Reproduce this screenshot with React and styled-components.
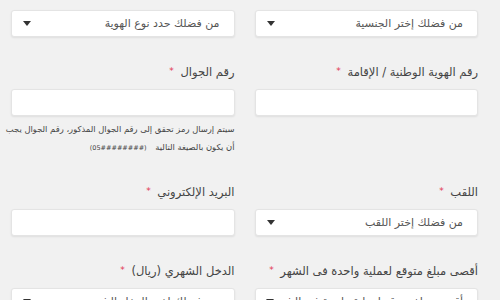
import styled, { createGlobalStyle } from "styled-components";

const GlobalStyle = createGlobalStyle`
  html, body {
    margin: 0;
    padding: 0;
    background: #f1f1f1;
  }
  body {
    font-family: "DejaVu Sans", "Noto Sans", sans-serif;
    overflow: hidden;
  }
`;

const Form = styled.div`
  direction: rtl;
  padding: 10px 22px 0 11px;
  display: flex;
  flex-direction: column;
  gap: 24px;
`;

const Row = styled.div`
  display: grid;
  grid-template-columns: minmax(0, 1fr) minmax(0, 1fr);
  column-gap: 20px;
  align-items: start;
`;

const Field = styled.div`
  display: flex;
  flex-direction: column;
  min-width: 0;
`;

const Label = styled.label`
  font-size: 11.5px;
  line-height: 20px;
  color: #444;
  margin-bottom: 7px;
  white-space: nowrap;
`;

const Star = styled.span`
  color: #e2344f;
  font-size: 9px;
  vertical-align: 2px;
  margin-right: 3px;
`;

const Box = styled.div`
  box-sizing: border-box;
  height: 27px;
  background: #fff;
  border: 1px solid #e4e4e4;
  border-radius: 3px;
  box-shadow: 0 1px 2px rgba(0, 0, 0, 0.08);
`;

const Select = styled(Box)`
  display: flex;
  align-items: center;
  justify-content: space-between;
  padding: 0 14px 0 11px;
  font-size: 11px;
  color: #555;
  white-space: nowrap;
  overflow: hidden;
`;

const Caret = styled.span`
  flex: none;
  width: 0;
  height: 0;
  border-left: 4.5px solid transparent;
  border-right: 4.5px solid transparent;
  border-top: 5px solid #333;
`;

const Help = styled.p`
  margin: 4px 0 0;
  font-size: 8.4px;
  line-height: 18px;
  color: #444;
  white-space: nowrap;
`;

const Format = styled.span`
  direction: ltr;
  unicode-bidi: isolate;
  font-size: 6.5px;
  margin-right: 6px;
`;

const Req = () => <Star>*</Star>;

const Dropdown = ({ text }) => (
  <Select>
    <span>{text}</span>
    <Caret />
  </Select>
);

const App = () => (
  <>
    <GlobalStyle />
    <Form>
      <Row>
        <Field>
          <Dropdown text="من فضلك إختر الجنسية" />
        </Field>
        <Field>
          <Dropdown text="من فضلك حدد نوع الهوية" />
        </Field>
      </Row>
      <Row>
        <Field>
          <Label>
            رقم الهوية الوطنية / الإقامة <Req />
          </Label>
          <Box />
        </Field>
        <Field>
          <Label>
            رقم الجوال <Req />
          </Label>
          <Box />
          <Help>
            سيتم إرسال رمز تحقق إلى رقم الجوال المذكور، رقم الجوال يجب
            <br />
            أن يكون بالصيغة التالية <Format>(05########)</Format>
          </Help>
        </Field>
      </Row>
      <Row>
        <Field>
          <Label>
            اللقب <Req />
          </Label>
          <Dropdown text="من فضلك إختر اللقب" />
        </Field>
        <Field>
          <Label>
            البريد الإلكتروني <Req />
          </Label>
          <Box />
        </Field>
      </Row>
      <Row>
        <Field>
          <Label>
            أقصى مبلغ متوقع لعملية واحدة فى الشهر <Req />
          </Label>
          <Dropdown text="أقصى مبلغ متوقع لعملية واحدة في الشهر" />
        </Field>
        <Field>
          <Label>
            الدخل الشهري (ريال) <Req />
          </Label>
          <Dropdown text="من فضلك إختر الدخل الشهري" />
        </Field>
      </Row>
    </Form>
  </>
);

export default App;
